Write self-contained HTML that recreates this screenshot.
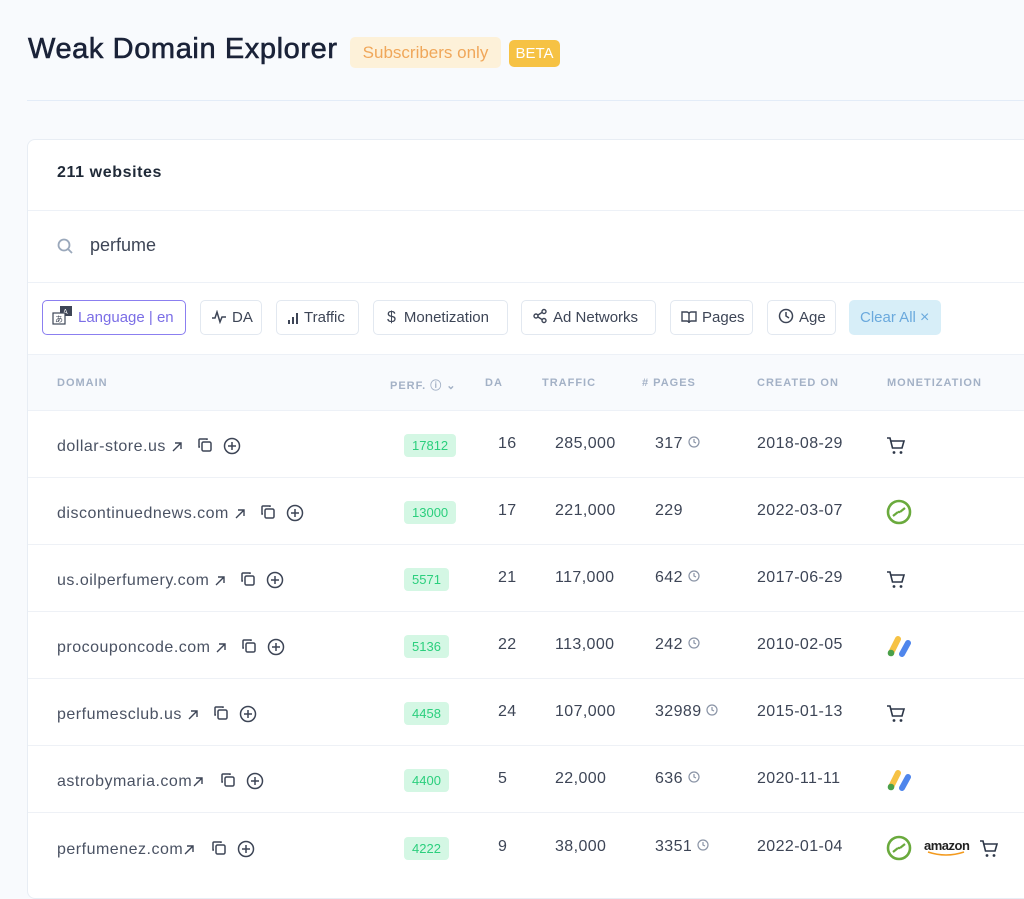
<!DOCTYPE html>
<html><head><meta charset="utf-8"><style>
*{margin:0;padding:0;box-sizing:border-box}
body{width:1024px;height:884px;overflow:hidden;background:#f8fafd;font-family:"Liberation Sans",sans-serif;position:relative;color:#2d3748}
.a{position:absolute}
h1{position:absolute;left:28px;top:33px;font-size:29px;font-weight:normal;color:#1a2238;letter-spacing:0.6px;-webkit-text-stroke:0.6px #1a2238}
.sub{left:350px;top:37px;height:31px;width:151px;background:#fdf1d9;border-radius:5px;color:#f0a75a;font-size:17px;line-height:31px;text-align:center}
.beta{left:509px;top:40px;height:27px;width:51px;background:#f6c244;border-radius:5px;color:#fff;font-size:15px;line-height:27px;text-align:center}
.hr{left:27px;top:100px;width:1000px;height:1px;background:#e3ecf8}
.card{left:27px;top:139px;width:1010px;height:760px;background:#fff;border:1px solid #e8edf4;border-radius:8px}
.line{height:1px;background:#edf1f7;left:28px;width:1000px}
.btn{top:300px;height:35px;border:1px solid #e2e8f0;border-radius:5px;background:#fff;font-size:15px;color:#3d4556;line-height:33px;padding-left:10px;white-space:nowrap}
.btn svg{vertical-align:-2px;margin-right:5px}
.th{top:377px;font-size:11px;font-weight:bold;color:#a3b1c6;letter-spacing:1px}
.row{position:absolute;left:28px;width:1000px;height:67px;border-bottom:1px solid #eef1f6;font-size:16px;letter-spacing:0.4px;color:#3d4556}
.row span{position:absolute}
.dom{left:29px;color:#4a5263;letter-spacing:0.5px}
.dom svg{vertical-align:-2px}
.badge{left:376px;height:23px;background:#d4f7e4;color:#2bcf7d;font-size:13px;letter-spacing:0;line-height:23px;padding:0 8px;border-radius:4px}
</style></head><body>
<h1>Weak Domain Explorer</h1>
<div class="a sub">Subscribers only</div>
<div class="a beta">BETA</div>
<div class="a hr"></div>
<div class="a card"></div>
<div class="a" style="left:57px;top:164px;font-size:16px;font-weight:bold;color:#1f2937;letter-spacing:0.6px">211 websites</div>
<div class="a line" style="top:210px"></div>
<svg class="a" style="left:57px;top:238px" width="17" height="17" viewBox="0 0 17 17" fill="none" stroke="#9aa8bb" stroke-width="1.8"><circle cx="7" cy="7" r="5.5"/><path d="M11 11l4 4"/></svg>
<div class="a" style="left:90px;top:235px;font-size:18px;color:#3d4556">perfume</div>
<div class="a line" style="top:282px"></div>

<div class="a btn" style="left:42px;width:144px;border-color:#8b7ff0;color:#7b6ee6;padding-left:9px"><svg width="22" height="22" viewBox="0 0 22 22" style="vertical-align:-5px;margin-right:4px"><rect x="8" y="1" width="12" height="10" fill="#3d4556"/><text x="11" y="9" font-size="7" fill="#fff" font-family="Liberation Sans">A</text><rect x="1" y="8" width="12" height="11" fill="#fff" stroke="#3d4556" stroke-width="1.2"/><text x="3" y="17" font-size="8" fill="#3d4556" font-family="Noto Sans CJK JP,sans-serif">あ</text></svg>Language | en</div>
<div class="a btn" style="left:200px;width:62px"><svg width="16" height="14" viewBox="0 0 16 14" fill="none" stroke="#3d4556" stroke-width="1.5"><path d="M1 8h3l2-6 3 10 2-5h4"/></svg>DA</div>
<div class="a btn" style="left:276px;width:83px"><svg width="12" height="12" viewBox="0 0 12 12" fill="#3d4556"><rect x="1" y="8" width="2" height="4"/><rect x="5" y="5" width="2" height="7"/><rect x="9" y="1" width="2" height="11"/></svg>Traffic</div>
<div class="a btn" style="left:373px;width:135px"><span style="margin:0 8px 0 3px;font-size:16px">$</span>Monetization</div>
<div class="a btn" style="left:521px;width:135px"><svg width="16" height="16" viewBox="0 0 16 16" fill="none" stroke="#3d4556" stroke-width="1.4"><circle cx="12" cy="3.5" r="2"/><circle cx="4" cy="8" r="2"/><circle cx="12" cy="12.5" r="2"/><path d="M6 7l4-2.5M6 9l4 2.5"/></svg>Ad Networks</div>
<div class="a btn" style="left:670px;width:83px"><svg width="16" height="14" viewBox="0 0 16 14" fill="none" stroke="#3d4556" stroke-width="1.4"><path d="M1 2h5c1 0 2 1 2 2v9c0-1-1-2-2-2H1zM15 2h-5c-1 0-2 1-2 2v9c0-1 1-2 2-2h5z"/></svg>Pages</div>
<div class="a btn" style="left:767px;width:69px"><svg width="16" height="16" viewBox="0 0 16 16" fill="none" stroke="#3d4556" stroke-width="1.5"><circle cx="8" cy="8" r="6.5"/><path d="M8 4v4l3 2"/></svg>Age</div>
<div class="a btn" style="left:849px;width:92px;background:#d7eef8;border-color:#d7eef8;color:#6aa9dd">Clear All <span style="font-size:16px">×</span></div>

<div class="a" style="left:28px;top:354px;width:1000px;height:57px;background:#f8fafd;border-top:1px solid #edf1f7;border-bottom:1px solid #edf1f7"></div>
<div class="a th" style="left:57px">DOMAIN</div>
<div class="a th" style="left:390px">PERF. ⓘ ⌄</div>
<div class="a th" style="left:485px">DA</div>
<div class="a th" style="left:542px">TRAFFIC</div>
<div class="a th" style="left:642px"># PAGES</div>
<div class="a th" style="left:757px">CREATED ON</div>
<div class="a th" style="left:887px">MONETIZATION</div>

<svg width="0" height="0" style="position:absolute"><defs>
<symbol id="ar" viewBox="0 0 12 12"><path d="M2 10l8-8M4 2h6v6" fill="none" stroke="#3d4556" stroke-width="1.4"/></symbol>
<symbol id="cp" viewBox="0 0 16 16"><g fill="none" stroke="#3d4556" stroke-width="1.5"><rect x="5" y="5" width="9" height="9" rx="1.5"/><path d="M3 10H2V3a1 1 0 011-1h7v1"/></g></symbol>
<symbol id="pl" viewBox="0 0 18 18"><g fill="none" stroke="#3d4556" stroke-width="1.5"><circle cx="9" cy="9" r="7.5"/><path d="M9 5v8M5 9h8"/></g></symbol>
<symbol id="ck" viewBox="0 0 12 12"><g fill="none" stroke="#8a94a6" stroke-width="1.2"><circle cx="6" cy="6" r="5"/><path d="M6 3v3l2 1"/></g></symbol>
<symbol id="ca" viewBox="0 0 20 20"><path d="M1 2h3l2.5 10h9.5l2-7H5" fill="none" stroke="#2d3748" stroke-width="1.6"/><circle cx="8" cy="16.5" r="1.4" fill="#2d3748"/><circle cx="15" cy="16.5" r="1.4" fill="#2d3748"/></symbol>
<symbol id="sh" viewBox="0 0 26 26"><circle cx="13" cy="13" r="11" fill="none" stroke="#6aaa3d" stroke-width="2.6"/><path d="M7 17l5-4M14 13l5-4M12 13l2 0" stroke="#6aaa3d" stroke-width="2.2" fill="none"/></symbol>
<symbol id="ad" viewBox="0 0 28 24"><path d="M5 19L12 5" stroke="#f6c244" stroke-width="6" stroke-linecap="round"/><path d="M16 20l6-11" stroke="#4f86ec" stroke-width="6" stroke-linecap="round"/><circle cx="5" cy="19" r="3.3" fill="#4aa04a"/></symbol>
</defs></svg>

<div class="row" style="top:411px"><span class="dom" style="top:26px">dollar-store.us <svg width="12" height="12"><use href="#ar"/></svg><svg width="16" height="16" style="margin-left:14px"><use href="#cp"/></svg><svg width="18" height="18" style="margin-left:10px;vertical-align:-4px"><use href="#pl"/></svg></span><span class="badge" style="top:23px">17812</span><span style="left:470px;top:24px">16</span><span style="left:527px;top:24px">285,000</span><span style="left:627px;top:24px">317 <svg width="12" height="12"><use href="#ck"/></svg></span><span style="left:729px;top:24px">2018-08-29</span><svg class="a" style="left:858px;top:25px" width="20" height="20"><use href="#ca"/></svg></div>
<div class="row" style="top:478px"><span class="dom" style="top:26px">discontinuednews.com <svg width="12" height="12"><use href="#ar"/></svg><svg width="16" height="16" style="margin-left:14px"><use href="#cp"/></svg><svg width="18" height="18" style="margin-left:10px;vertical-align:-4px"><use href="#pl"/></svg></span><span class="badge" style="top:23px">13000</span><span style="left:470px;top:24px">17</span><span style="left:527px;top:24px">221,000</span><span style="left:627px;top:24px">229</span><span style="left:729px;top:24px">2022-03-07</span><svg class="a" style="left:858px;top:21px" width="26" height="26"><use href="#sh"/></svg></div>
<div class="row" style="top:545px"><span class="dom" style="top:26px">us.oilperfumery.com <svg width="12" height="12"><use href="#ar"/></svg><svg width="16" height="16" style="margin-left:14px"><use href="#cp"/></svg><svg width="18" height="18" style="margin-left:10px;vertical-align:-4px"><use href="#pl"/></svg></span><span class="badge" style="top:23px">5571</span><span style="left:470px;top:24px">21</span><span style="left:527px;top:24px">117,000</span><span style="left:627px;top:24px">642 <svg width="12" height="12"><use href="#ck"/></svg></span><span style="left:729px;top:24px">2017-06-29</span><svg class="a" style="left:858px;top:25px" width="20" height="20"><use href="#ca"/></svg></div>
<div class="row" style="top:612px"><span class="dom" style="top:26px">procouponcode.com <svg width="12" height="12"><use href="#ar"/></svg><svg width="16" height="16" style="margin-left:14px"><use href="#cp"/></svg><svg width="18" height="18" style="margin-left:10px;vertical-align:-4px"><use href="#pl"/></svg></span><span class="badge" style="top:23px">5136</span><span style="left:470px;top:24px">22</span><span style="left:527px;top:24px">113,000</span><span style="left:627px;top:24px">242 <svg width="12" height="12"><use href="#ck"/></svg></span><span style="left:729px;top:24px">2010-02-05</span><svg class="a" style="left:858px;top:22px" width="28" height="24"><use href="#ad"/></svg></div>
<div class="row" style="top:679px"><span class="dom" style="top:26px">perfumesclub.us <svg width="12" height="12"><use href="#ar"/></svg><svg width="16" height="16" style="margin-left:14px"><use href="#cp"/></svg><svg width="18" height="18" style="margin-left:10px;vertical-align:-4px"><use href="#pl"/></svg></span><span class="badge" style="top:23px">4458</span><span style="left:470px;top:24px">24</span><span style="left:527px;top:24px">107,000</span><span style="left:627px;top:24px">32989 <svg width="12" height="12"><use href="#ck"/></svg></span><span style="left:729px;top:24px">2015-01-13</span><svg class="a" style="left:858px;top:25px" width="20" height="20"><use href="#ca"/></svg></div>
<div class="row" style="top:746px"><span class="dom" style="top:26px">astrobymaria.com<svg width="12" height="12"><use href="#ar"/></svg><svg width="16" height="16" style="margin-left:16px"><use href="#cp"/></svg><svg width="18" height="18" style="margin-left:10px;vertical-align:-4px"><use href="#pl"/></svg></span><span class="badge" style="top:23px">4400</span><span style="left:470px;top:24px">5</span><span style="left:527px;top:24px">22,000</span><span style="left:627px;top:24px">636 <svg width="12" height="12"><use href="#ck"/></svg></span><span style="left:729px;top:24px">2020-11-11</span><svg class="a" style="left:858px;top:22px" width="28" height="24"><use href="#ad"/></svg></div>
<div class="row" style="top:813px;border:none"><span class="dom" style="top:27px">perfumenez.com<svg width="12" height="12"><use href="#ar"/></svg><svg width="16" height="16" style="margin-left:16px"><use href="#cp"/></svg><svg width="18" height="18" style="margin-left:10px;vertical-align:-4px"><use href="#pl"/></svg></span><span class="badge" style="top:24px">4222</span><span style="left:470px;top:25px">9</span><span style="left:527px;top:25px">38,000</span><span style="left:627px;top:25px">3351 <svg width="12" height="12"><use href="#ck"/></svg></span><span style="left:729px;top:25px">2022-01-04</span><svg class="a" style="left:858px;top:22px" width="26" height="26"><use href="#sh"/></svg><span style="left:896px;top:25px;font-size:13px;font-weight:bold;color:#222;letter-spacing:-0.5px">amazon</span><svg class="a" style="left:898px;top:38px" width="42" height="6"><path d="M2 1q18 6 36 0" fill="none" stroke="#f39a1e" stroke-width="1.6"/></svg><svg class="a" style="left:951px;top:26px" width="20" height="20"><use href="#ca"/></svg></div>
</body></html>
